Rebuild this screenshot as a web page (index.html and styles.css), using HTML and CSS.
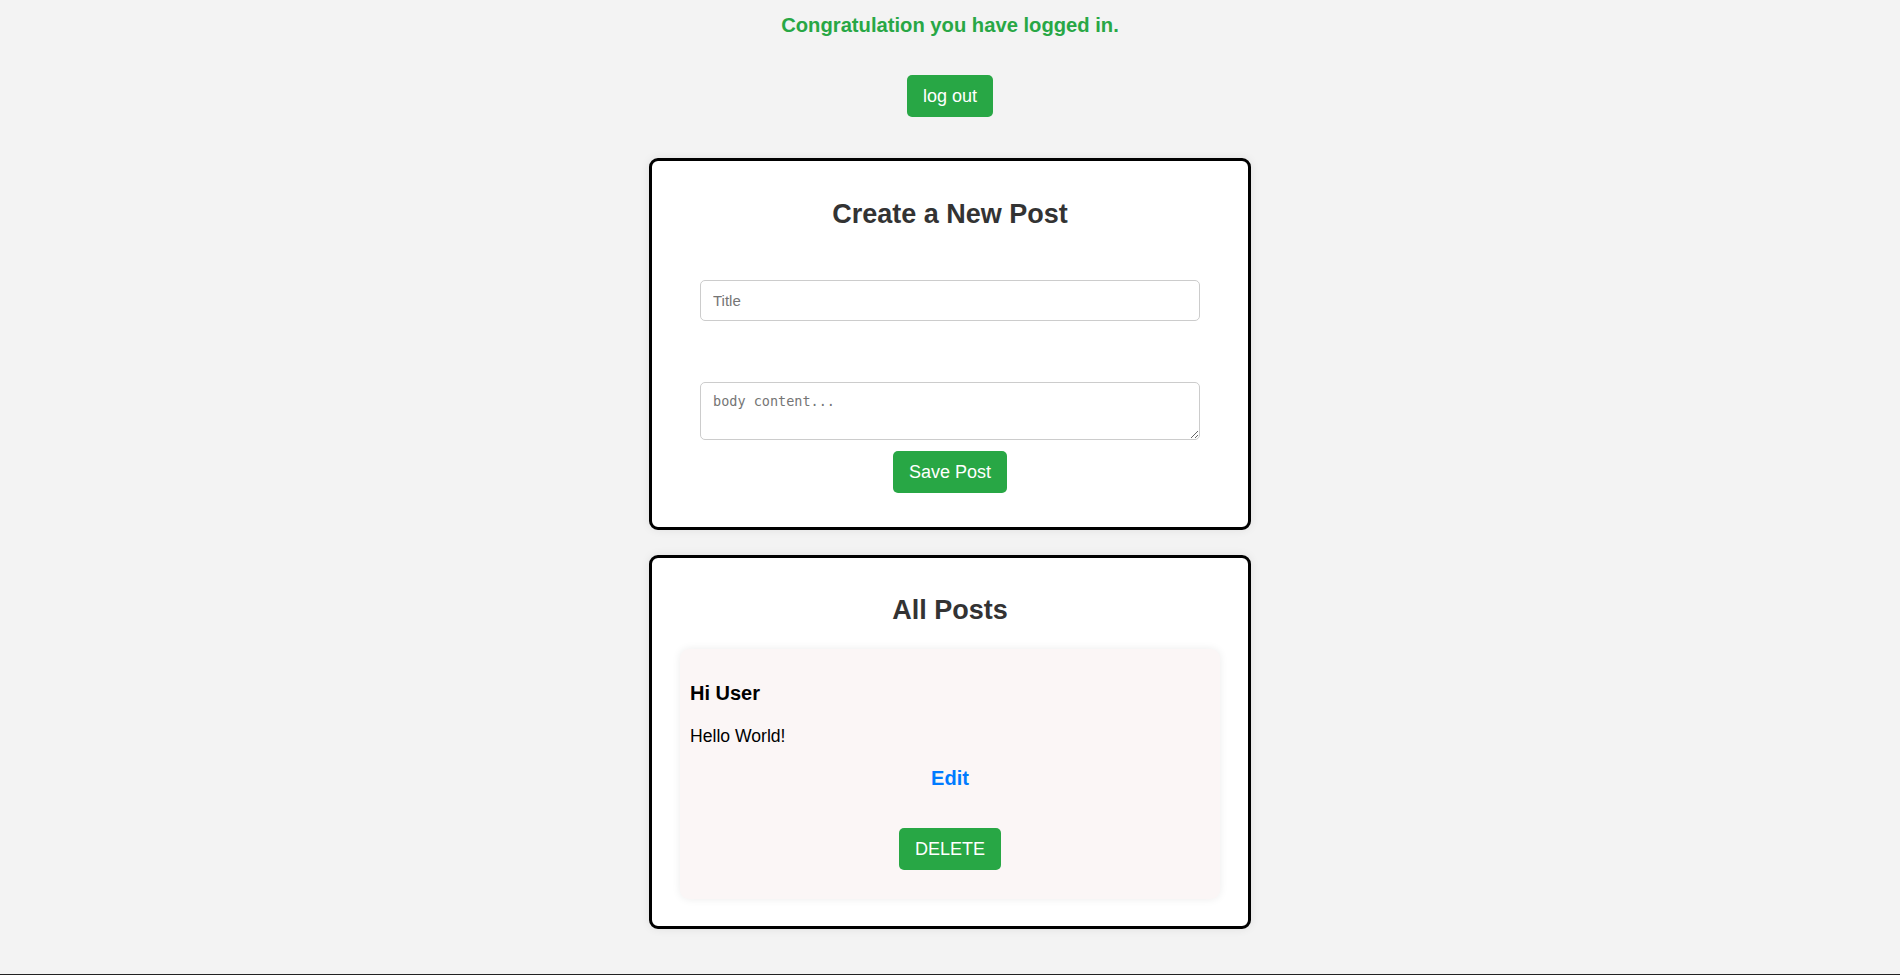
FILE: index.html
```html
<!DOCTYPE html>
<html lang="en">
<head>
<meta charset="utf-8">
<title>Posts</title>
<link rel="stylesheet" href="styles.css">
</head>
<body>
<main class="page">
  <p class="welcome">Congratulation you have logged in.</p>
  <button class="btn btn-logout" type="button">log out</button>

  <section class="card card-create">
    <h2 class="card-title">Create a New Post</h2>
    <form class="post-form">
      <input class="field field-title" type="text" placeholder="Title">
      <textarea class="field field-body" placeholder="body content..."></textarea>
      <button class="btn btn-save" type="button">Save Post</button>
    </form>
  </section>

  <section class="card card-posts">
    <h2 class="card-title">All Posts</h2>
    <article class="post">
      <h3 class="post-title">Hi User</h3>
      <p class="post-body">Hello World!</p>
      <div class="post-actions">
        <a class="edit-link" href="#">Edit</a>
        <button class="btn btn-delete" type="button">DELETE</button>
      </div>
    </article>
  </section>
</main>
<footer class="footer"></footer>
</body>
</html>
```

FILE: styles.css
```css
* {
  box-sizing: border-box;
}

html, body {
  margin: 0;
  padding: 0;
}

body {
  background: #f3f3f3;
  font-family: "Liberation Sans", Arial, sans-serif;
  color: #000;
}

.page {
  display: flex;
  flex-direction: column;
  align-items: center;
}

.welcome {
  margin: 14px 0 0;
  font-size: 20.2px;
  line-height: 23px;
  font-weight: bold;
  color: #28a745;
}

.btn {
  font-family: "Liberation Sans", Arial, sans-serif;
  font-size: 18px;
  line-height: 22px;
  padding: 10px 16px;
  border: 0;
  border-radius: 5px;
  background: #28a745;
  color: #fff;
  cursor: pointer;
}

.btn-logout {
  margin-top: 38px;
}

.card {
  width: 602px;
  background: #fff;
  border: 3px solid #000;
  border-radius: 9px;
  box-shadow: 0 0 10px rgba(0, 0, 0, 0.08);
  display: flex;
  flex-direction: column;
  align-items: center;
}

.card-create {
  margin-top: 41px;
  padding: 38px 0 34px;
}

.card-posts {
  margin-top: 25px;
  padding: 37px 0 27px;
}

.card-title {
  margin: 0;
  font-size: 27px;
  line-height: 31px;
  font-weight: bold;
  color: #333;
}

.post-form {
  display: flex;
  flex-direction: column;
  align-items: center;
  margin-top: 50px;
}

.field {
  display: block;
  width: 500px;
  border: 1px solid #ccc;
  border-radius: 5px;
  background: #fff;
  color: #333;
  padding: 0 12px;
  outline: none;
}

.field::placeholder {
  color: #757575;
}

.field-title {
  height: 41px;
  font-family: "Liberation Sans", Arial, sans-serif;
  font-size: 15px;
}

.field-body {
  margin-top: 61px;
  height: 58px;
  padding: 10px 12px;
  font-family: "DejaVu Sans Mono", "Liberation Mono", monospace;
  font-size: 13.5px;
  line-height: 16px;
  resize: vertical;
}

.btn-save {
  margin-top: 11px;
}

.post {
  margin-top: 23px;
  width: 540px;
  height: 250px;
  padding: 10px;
  background: #fbf6f6;
  border-radius: 9px;
  box-shadow: 0 0 8px rgba(0, 0, 0, 0.08);
}

.post-title {
  margin: 23px 0 0;
  font-size: 20px;
  line-height: 23px;
  font-weight: bold;
}

.post-body {
  margin: 21px 0 0;
  font-size: 17.6px;
  line-height: 20px;
}

.post-actions {
  display: flex;
  flex-direction: column;
  align-items: center;
  margin-top: 21px;
}

.edit-link {
  font-size: 20px;
  line-height: 23px;
  font-weight: bold;
  color: #007bff;
  text-decoration: none;
}

.btn-delete {
  margin-top: 38px;
}

.footer {
  margin-top: 45px;
  height: 1px;
  background: #222;
}
```
